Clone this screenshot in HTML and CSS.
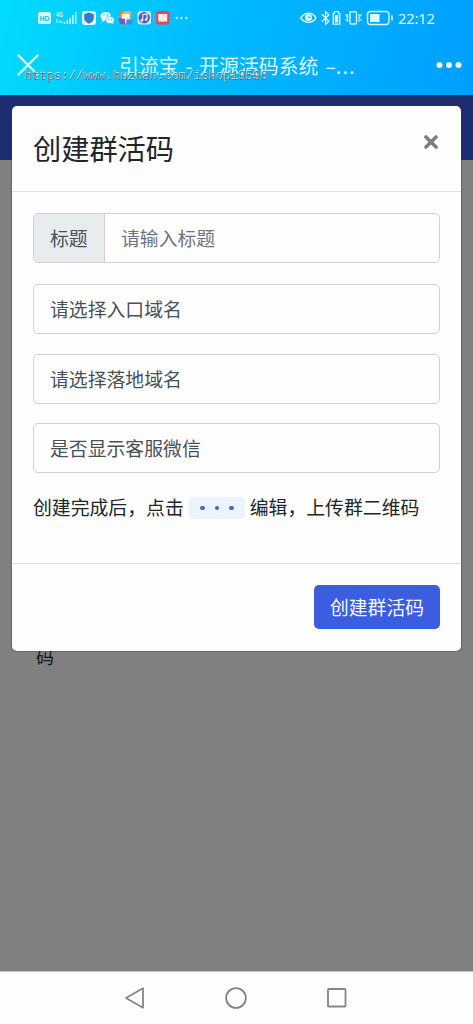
FILE: index.html
```html
<!DOCTYPE html>
<html lang="zh-CN">
<head>
<meta charset="utf-8">
<title>引流宝</title>
<link rel="stylesheet" href="styles.css">
</head>
<body>
<div class="phone">
  <header class="top">
    <div class="status">
      <svg class="status-left" width="154" height="18" viewBox="36 9 154 18">
        <rect x="38" y="12" width="13" height="12" rx="2.5" fill="#d5fbff"/>
        <text class="hd" x="39.5" y="21.2" textLength="10" lengthAdjust="spacingAndGlyphs">HD</text>
        <text class="net" x="56" y="17" textLength="7" lengthAdjust="spacingAndGlyphs">4G</text>
        <path d="M57 19.500v3.500M60 20v3M62 21.500v1.500M56 20l1-.8" stroke="#c8f8ff" fill="none"/>
        <path d="M64.500 24v-2M67.300 24v-4M70.100 24v-6M72.900 24v-9M75.700 24v-12" stroke="#c8f8ff" stroke-width="1.500" fill="none"/>
        <rect x="82" y="11" width="14" height="14" rx="3" fill="#e3f8ff"/>
        <path d="M89 12.500l4.800 1.700v4c0 2.500-2.200 4.200-4.800 5.500-2.600-1.300-4.800-3-4.800-5.500v-4z" fill="#337bd0"/>
        <ellipse cx="105.700" cy="16.200" rx="5.200" ry="4.300" fill="#dffbff"/>
        <path d="M102.500 19l-.6 3 3-1.500z" fill="#dffbff"/>
        <ellipse cx="110" cy="20" rx="4.200" ry="3.500" fill="#dffbff" stroke="#35bdea" stroke-width=".6"/>
        <path d="M111 22.500l2.300 1.600-.3-2.500z" fill="#dffbff"/>
        <g fill="#27b8ec"><circle cx="104" cy="15" r=".7"/><circle cx="107.400" cy="15" r=".7"/><circle cx="108.600" cy="19.300" r=".6"/><circle cx="111.400" cy="19.300" r=".6"/></g>
        <defs><linearGradient id="app" x1="0" y1="0" x2="1" y2=".5"><stop offset="0" stop-color="#f05a4b"/><stop offset=".5" stop-color="#ffb23e"/><stop offset="1" stop-color="#35b9e8"/></linearGradient></defs>
        <rect x="119" y="11" width="13.500" height="13.500" rx="3" fill="url(#app)"/>
        <path d="M119 18h6v6.500h-3a3 3 0 0 1-3-3z" fill="#7955d8"/><path d="M126 20h6.500v1.500a3 3 0 0 1-3 3H126z" fill="#4586e8"/>
        <path d="M122.500 14.500h6.500v3.500h-6.500zM125.800 18v5" fill="#fff3e5" stroke="#fff3e5" stroke-width="1.300"/>
        <rect x="137.500" y="11" width="13.500" height="13.500" rx="3" fill="#d9ebff"/><circle cx="144.200" cy="17.800" r="5.700" fill="#5260bd"/>
        <path d="M142.800 20.300v-5.500l4.200-1v5.500" fill="none" stroke="#edf4ff" stroke-width="1.100"/><circle cx="141.900" cy="20.400" r="1.300" fill="#edf4ff"/><circle cx="146.100" cy="19.500" r="1.300" fill="#edf4ff"/>
        <rect x="156" y="11" width="13.500" height="13.500" rx="2.500" fill="#e84756"/><path d="M158.300 14h3.900l.5.500.5-.5h4v7.500h-4l-.5.500-.5-.5h-3.900z" fill="#fff0ef"/><path d="M162.700 14.500v7" stroke="#f7c2c3" stroke-width=".5"/>
        <g fill="#b9efff"><circle cx="176.700" cy="18" r="1.200"/><circle cx="181.500" cy="18" r="1.200"/><circle cx="186.300" cy="18" r="1.200"/></g>
      </svg>
      <div class="status-right">
        <svg width="94" height="18" viewBox="299 9 94 18" fill="none" stroke="#d6f8ff" stroke-width="1.400">
          <path d="M300.700 18c4.500-6.300 11.500-6.300 15.300 0-3.800 5.800-10.800 5.800-15.300 0z"/><circle cx="308.500" cy="17.500" r="3.600" fill="#d6f8ff" stroke="none"/><path d="M308.800 15.800v1.700h2" stroke="#12aef8" stroke-width=".9"/>
          <path d="M322 14.300l7 7-3.400 3V11.700l3.400 3-7 7" stroke-width="1.300"/>
          <path d="M334.500 11.700h4v1.600h1.300v10.900h-6.600V13.300h1.300z" stroke-width="1.300"/><path d="M336.500 15v7.500" stroke-width="3.400"/>
          <rect x="350" y="11.700" width="6.500" height="12.300" rx="1.300"/><path d="M347.700 14v2l-1 1 1 1v4M359 14v2l1 1-1 1v4M346 14v2M346 19v2M361 14v2M361 19v2" stroke-width="1.100"/>
          <rect x="367.500" y="11.500" width="21.500" height="13" rx="3"/><rect x="370" y="14" width="9.500" height="8" fill="#e1fbff" stroke="none"/><path d="M392 15.500v5" stroke-width="1.600"/>
        </svg>
        <span class="time">22:12</span>
      </div>
    </div>
    <div class="titlebar">
      <svg width="22" height="22" viewBox="0 0 22 22"><path d="M1.500 1.500l19 19M20.500 1.500l-19 19" stroke="#e4fcff" stroke-width="2.300" stroke-linecap="round"/></svg>
      <span class="page-title">引流宝 - 开源活码系统 –<span class="dots">...</span></span>
      <svg width="26" height="8" viewBox="0 0 26 8" fill="#f2fcff"><circle cx="3.500" cy="4" r="3"/><circle cx="13" cy="4" r="3"/><circle cx="22.500" cy="4" r="3"/></svg>
    </div>
    <span class="watermark">https://www.huzhan.com/ishop19596</span>
  </header>
  <main class="stage">
    <section class="modal">
      <div class="modal-header">
        <h1>创建群活码</h1>
        <svg class="close" width="14" height="14" viewBox="0 0 14 14"><path d="M2 2l10 10M12 2L2 12" stroke="#7d7d7d" stroke-width="3.600" stroke-linecap="round"/></svg>
      </div>
      <div class="modal-body">
        <div class="field group"><span class="label">标题</span><span class="placeholder">请输入标题</span></div>
        <div class="field">请选择入口域名</div>
        <div class="field">请选择落地域名</div>
        <div class="field">是否显示客服微信</div>
        <p class="hint"><span>创建完成后，点击</span><span class="badge"><i></i><i></i><i></i></span><span>编辑，上传群二维码</span></p>
      </div>
      <div class="modal-footer"><button class="primary">创建群活码</button></div>
    </section>
    <div class="behind">码</div>
  </main>
  <nav class="navbar">
    <svg width="22" height="24" viewBox="0 0 22 24"><path d="M19 2.300v19.400L2 12z"/></svg>
    <svg width="24" height="24" viewBox="0 0 24 24"><circle cx="12" cy="12" r="9.900"/></svg>
    <svg width="22" height="24" viewBox="0 0 22 24"><rect x="2" y="3" width="17.500" height="17.500" rx=".8"/></svg>
  </nav>
</div>
</body>
</html>
```
FILE: styles.css
```css
* { box-sizing: border-box; }
body { margin: 0; font-family: "Noto Sans CJK SC", sans-serif; }
.phone { width: 473px; height: 1024px; display: flex; flex-direction: column; overflow: hidden; }
.top { position: relative; height: 95px; flex: none; padding-top: 9px; background: linear-gradient(105deg, #00dcff 0%, #00b9ff 45%, #009fff 100%); }
.status { display: flex; justify-content: space-between; height: 18px; padding: 0 38px 0 36px; }
.status-right { display: flex; gap: 5px; align-items: center; }
.time { font: 14.600px/18px "Noto Sans", sans-serif; color: #dcf8ff; width: 37px; white-space: nowrap; letter-spacing: -.1px; }
.hd { font: bold 7.500px "Liberation Sans", sans-serif; fill: #18bfdc; }
.net { font: bold 7px "Liberation Sans", sans-serif; fill: #c8f8ff; }
.titlebar { display: flex; align-items: center; height: 38px; margin-top: 20px; padding: 0 11px 0 17px; }
.titlebar > svg { margin-top: -2px; }
.page-title { flex: 1; padding-left: 80px; font-size: 19.900px; line-height: 38px; color: #d8faff; white-space: nowrap; word-spacing: 2.300px; }
.dots { letter-spacing: 1px; }
.watermark { position: absolute; left: 25px; top: 69px; font: 12.270px/16px "Liberation Mono", monospace; color: #55798a; text-shadow: -.7px -.7px 0 #c3eef8; white-space: nowrap; }
.stage { flex: 1; padding: 11px 12px 0; background: linear-gradient(#1c2d70 0 65px, #808080 65px); }
.modal { position: relative; z-index: 1; height: 545px; width: 449px; display: flex; flex-direction: column; background: #fefefe; border-radius: 5px; box-shadow: 0 0 1px 1px rgba(60, 60, 60, .35); }
.modal-header { height: 86px; display: flex; justify-content: space-between; padding: 21px 23px 0 21px; border-bottom: 1.500px solid #dee1e3; }
h1 { margin: 0; font-size: 28.200px; line-height: 42px; font-weight: 400; color: #212529; }
.close { margin-top: 8px; }
.modal-body { flex: 1; padding: 21px 21px 0; }
.field { height: 50px; margin-bottom: 19.600px; padding-left: 16px; border: 1px solid #ced2d5; border-radius: 5px; font-size: 18.850px; line-height: 47px; color: #495057; }
.group { display: flex; padding: 0; margin-bottom: 21px; overflow: hidden; }
.label { width: 71px; padding-left: 16px; background: #e9ecef; border-right: 1px solid #ced2d5; line-height: 48px; }
.placeholder { padding-left: 16px; color: #6c757d; line-height: 48px; }
.hint { display: flex; align-items: center; margin: 0; font-size: 18.850px; line-height: 28px; color: #212529; white-space: nowrap; }
.badge { display: flex; align-items: center; justify-content: center; gap: 10px; width: 56px; height: 22px; margin: 2px 5px 0 5px; background: #ebf3fe; border-radius: 4px; }
.badge i { width: 4.500px; height: 4.500px; border-radius: 50%; background: #4268bd; }
.modal-footer { height: 88px; display: flex; justify-content: flex-end; padding: 21px 21px 0; border-top: 1.500px solid #dee1e3; }
.primary { width: 126px; height: 44px; padding: 0 0 1px; border: 0; border-radius: 5px; background: #3b5de0; color: #f5f8ff; font: 18.800px/42px "Noto Sans CJK SC", sans-serif; }
.behind { margin: -9px 0 0 24px; font-size: 18px; line-height: 28px; color: #161616; }
.navbar { height: 53px; flex: none; display: flex; justify-content: center; align-items: center; gap: 78px; padding-right: 1px; background: #fdfdfd; border-top: 1px solid #c4c4c4; }
.navbar svg { fill: none; stroke: #858585; stroke-width: 1.800; stroke-linejoin: round; }
```
